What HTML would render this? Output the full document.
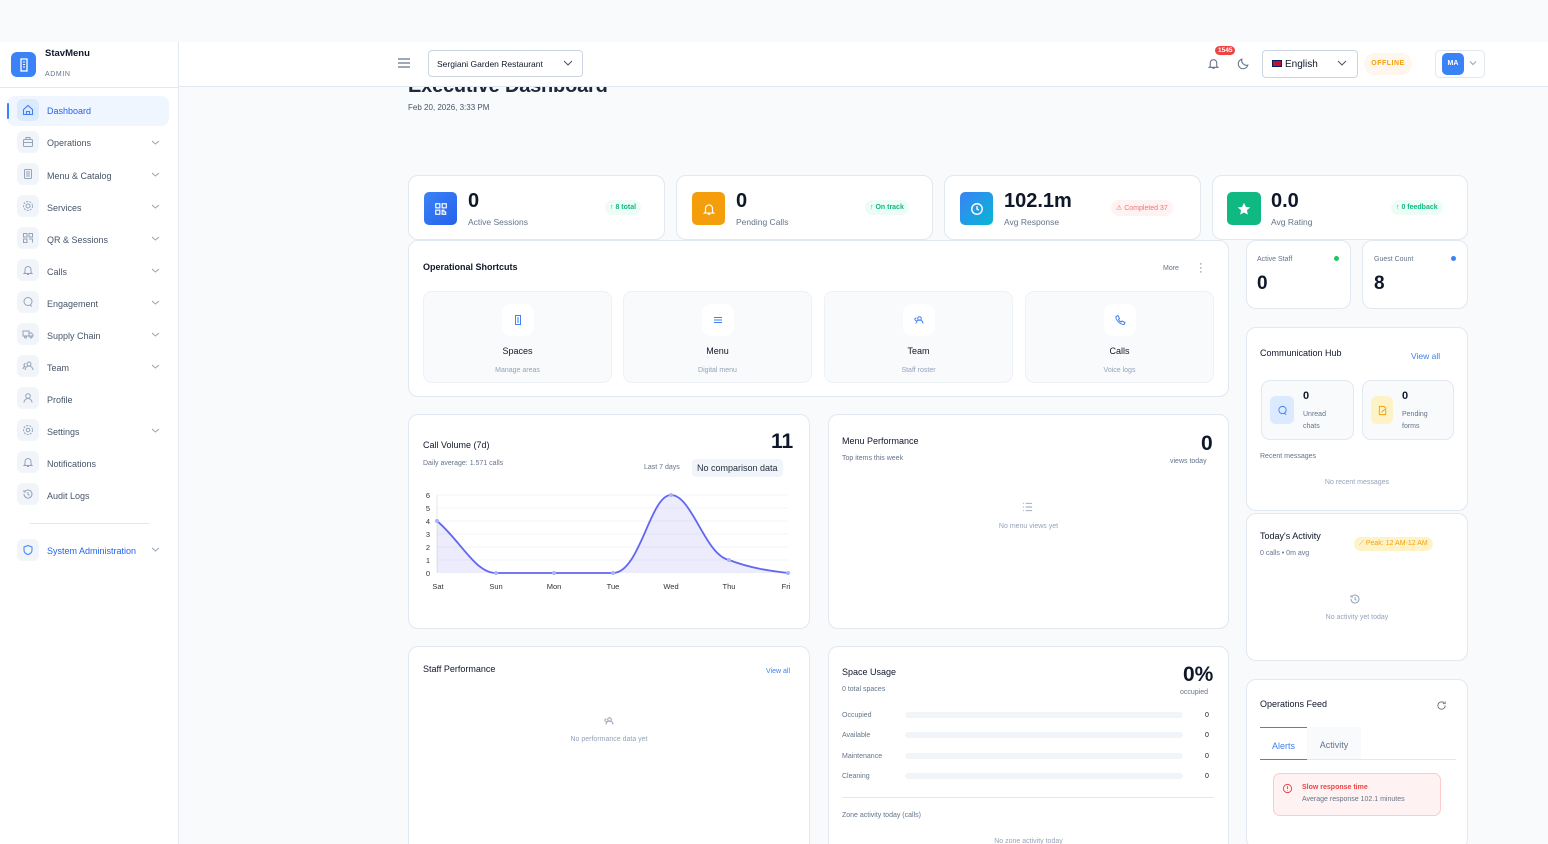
<!DOCTYPE html>
<html><head><meta charset="utf-8"><style>
*{box-sizing:border-box;margin:0;padding:0}
html,body{width:1548px;height:844px;overflow:hidden}
body{background:#f8fafc;font-family:"Liberation Sans",sans-serif;color:#0f172a;position:relative}
.a{position:absolute}
.card{position:absolute;background:#fff;border:1px solid #e2e8f0;border-radius:10px}
.side{position:absolute;left:0;top:42px;width:179px;height:802px;background:#fff;border-right:1px solid #e2e8f0}
.ni{position:absolute;left:17px;width:22px;height:22px;border-radius:6px;background:#f1f5f9;display:flex;align-items:center;justify-content:center}
.nl{position:absolute;left:47px;font-size:9px;color:#475569}
.ch{position:absolute;left:151px;width:9px;height:9px}
.t{font-size:9px;font-weight:bold;color:#0f172a}
.s{font-size:7px;color:#94a3b8}
.big{font-size:20px;font-weight:bold}
.pill{position:absolute;font-size:7px;font-weight:bold;border-radius:9px;padding:4px 5px}
.sc{position:absolute;top:50px;width:189px;height:92px;background:#f8fafc;border:1px solid #eef2f7;border-radius:9px;text-align:center}
.sc .ic{width:32px;height:32px;background:#fff;border-radius:9px;margin:12px auto 10px;display:flex;align-items:center;justify-content:center}
.sc b{display:block;font-size:9px;font-weight:normal;color:#0f172a;margin-bottom:3px}
.bar{position:absolute;left:76px;width:278px;height:6px;background:#f1f5f9;border-radius:3px}
</style></head><body>

<div class="side">
  <div class="a" style="left:11px;top:10px;width:25px;height:25px;background:#3b82f6;border-radius:6px;display:flex;align-items:center;justify-content:center"><svg width="12" height="14" viewBox="0 0 12 14"><rect x="3" y="1" width="6" height="12" fill="none" stroke="#fff" stroke-width="1.3"/><path d="M5 4h2M5 6.5h2M5 9h2" stroke="#fff"/></svg></div>
  <div class="a" style="left:45px;top:6px;font-size:9.5px;font-weight:bold">StavMenu</div>
  <div class="a" style="left:45px;top:29px;font-size:7px;color:#64748b;letter-spacing:.6px">ADMIN</div>
  <div class="a" style="left:0;top:45px;width:179px;border-top:1px solid #e2e8f0"></div>
  <div class="a" style="left:7px;top:54px;width:162px;height:30px;background:#eff6ff;border-radius:8px"></div>
  <div class="a" style="left:7px;top:61px;width:2px;height:16px;background:#3b82f6;border-radius:1px"></div>
</div>
<div class="a" style="left:0;top:42px;width:179px;height:802px">
<div class="ni" style="top:57px;background:#dbeafe"><svg width="12" height="12" viewBox="0 0 12 12" fill="none" stroke="#3b82f6" stroke-width="1.1"><path d="M1.5 5.5L6 1.5l4.5 4v5h-9z M4.5 10.5v-3h3v3"/></svg></div><div class="nl" style="top:64px;color:#2563eb">Dashboard</div>
<div class="ni" style="top:89px"><svg width="12" height="12" viewBox="0 0 12 12" fill="none" stroke="#94a3b8"><rect x="1.5" y="3.5" width="9" height="7" rx="1"/><path d="M4 3.5v-2h4v2M1.5 6.5h9"/></svg></div><div class="nl" style="top:96px">Operations</div>
<div class="ni" style="top:121px"><svg width="12" height="12" viewBox="0 0 12 12" fill="none" stroke="#94a3b8"><rect x="2.5" y="1.5" width="7" height="9" rx="1"/><path d="M4 4h4M4 6h4M4 8h4"/></svg></div><div class="nl" style="top:129px">Menu &amp; Catalog</div>
<div class="ni" style="top:153px"><svg width="12" height="12" viewBox="0 0 12 12" fill="none" stroke="#94a3b8"><circle cx="6" cy="6" r="2"/><circle cx="6" cy="6" r="4.5" stroke-dasharray="2 1.2"/></svg></div><div class="nl" style="top:161px">Services</div>
<div class="ni" style="top:185px"><svg width="12" height="12" viewBox="0 0 12 12" fill="none" stroke="#94a3b8"><rect x="1.5" y="1.5" width="3.5" height="3.5"/><rect x="7" y="1.5" width="3.5" height="3.5"/><rect x="1.5" y="7" width="3.5" height="3.5"/><path d="M7 7h3.5v3.5"/></svg></div><div class="nl" style="top:193px">QR &amp; Sessions</div>
<div class="ni" style="top:217px"><svg width="12" height="12" viewBox="0 0 12 12" fill="none" stroke="#94a3b8"><path d="M3 8.5V5.5a3 3 0 016 0v3l1 1H2zM5 10.5h2"/></svg></div><div class="nl" style="top:225px">Calls</div>
<div class="ni" style="top:249px"><svg width="12" height="12" viewBox="0 0 12 12" fill="none" stroke="#94a3b8"><circle cx="6" cy="5.5" r="4"/><path d="M8 9l2 1.5"/></svg></div><div class="nl" style="top:257px">Engagement</div>
<div class="ni" style="top:281px"><svg width="12" height="12" viewBox="0 0 12 12" fill="none" stroke="#94a3b8"><rect x="1" y="3" width="6" height="5"/><path d="M7 5h2.5l1.5 2v1H7"/><circle cx="3.5" cy="9" r="1"/><circle cx="9" cy="9" r="1"/></svg></div><div class="nl" style="top:289px">Supply Chain</div>
<div class="ni" style="top:313px"><svg width="12" height="12" viewBox="0 0 12 12" fill="none" stroke="#94a3b8"><circle cx="7" cy="4" r="2"/><path d="M3 10a4 4 0 018 0M3.5 3.5a1.5 1.5 0 100 3M1 9a3 3 0 012-2.5"/></svg></div><div class="nl" style="top:321px">Team</div>
<div class="ni" style="top:345px"><svg width="12" height="12" viewBox="0 0 12 12" fill="none" stroke="#94a3b8"><circle cx="6" cy="4" r="2.3"/><path d="M2 10.5a4 4 0 018 0"/></svg></div><div class="nl" style="top:353px">Profile</div>
<div class="ni" style="top:377px"><svg width="12" height="12" viewBox="0 0 12 12" fill="none" stroke="#94a3b8"><circle cx="6" cy="6" r="1.8"/><circle cx="6" cy="6" r="4.5" stroke-dasharray="2 1.2"/></svg></div><div class="nl" style="top:385px">Settings</div>
<div class="ni" style="top:409px"><svg width="12" height="12" viewBox="0 0 12 12" fill="none" stroke="#94a3b8"><path d="M3 8.5V5.5a3 3 0 016 0v3l1 1H2zM5 10.5h2"/></svg></div><div class="nl" style="top:417px">Notifications</div>
<div class="ni" style="top:441px"><svg width="12" height="12" viewBox="0 0 12 12" fill="none" stroke="#94a3b8"><path d="M2 6a4 4 0 101.2-2.8M2 2v2h2M6 4v2.3l1.5 1"/></svg></div><div class="nl" style="top:449px">Audit Logs</div>
<div class="a" style="left:30px;top:481px;width:120px;border-top:1px solid #e5e7eb"></div>
<div class="ni" style="top:497px"><svg width="12" height="12" viewBox="0 0 12 12" fill="none" stroke="#3b82f6"><path d="M6 1.5l4 1.5v3c0 2.5-2 4-4 4.5-2-.5-4-2-4-4.5v-3z"/></svg></div><div class="nl" style="top:504px;color:#2563eb">System Administration</div>
<svg class="ch" style="top:96px" viewBox="0 0 9 9"><path d="M1 3l3.5 3L8 3" fill="none" stroke="#94a3b8"/></svg>
<svg class="ch" style="top:128px" viewBox="0 0 9 9"><path d="M1 3l3.5 3L8 3" fill="none" stroke="#94a3b8"/></svg>
<svg class="ch" style="top:160px" viewBox="0 0 9 9"><path d="M1 3l3.5 3L8 3" fill="none" stroke="#94a3b8"/></svg>
<svg class="ch" style="top:192px" viewBox="0 0 9 9"><path d="M1 3l3.5 3L8 3" fill="none" stroke="#94a3b8"/></svg>
<svg class="ch" style="top:224px" viewBox="0 0 9 9"><path d="M1 3l3.5 3L8 3" fill="none" stroke="#94a3b8"/></svg>
<svg class="ch" style="top:256px" viewBox="0 0 9 9"><path d="M1 3l3.5 3L8 3" fill="none" stroke="#94a3b8"/></svg>
<svg class="ch" style="top:288px" viewBox="0 0 9 9"><path d="M1 3l3.5 3L8 3" fill="none" stroke="#94a3b8"/></svg>
<svg class="ch" style="top:320px" viewBox="0 0 9 9"><path d="M1 3l3.5 3L8 3" fill="none" stroke="#94a3b8"/></svg>
<svg class="ch" style="top:384px" viewBox="0 0 9 9"><path d="M1 3l3.5 3L8 3" fill="none" stroke="#94a3b8"/></svg>
<svg class="ch" style="top:503px" viewBox="0 0 9 9"><path d="M1 3l3.5 3L8 3" fill="none" stroke="#94a3b8"/></svg>
</div>

<div class="a" style="left:408px;top:75px;font-size:20px;font-weight:bold;color:#1e293b;letter-spacing:-0.2px">Executive Dashboard</div>
<div class="a" style="left:408px;top:103px;font-size:8px;color:#475569">Feb 20, 2026, 3:33 PM</div>

<div class="a" style="left:179px;top:42px;width:1369px;height:45px;background:#fff;border-bottom:1px solid #e2e8f0"></div>
<svg class="a" style="left:398px;top:58px" width="12" height="10" viewBox="0 0 12 10"><path d="M0 1h12M0 5h12M0 9h12" stroke="#64748b" stroke-width="1.2"/></svg>
<div class="a" style="left:428px;top:50px;width:155px;height:27px;border:1px solid #cbd5e1;border-radius:4px;font-size:8.5px;padding:8px 0 0 8px">Sergiani Garden Restaurant</div>
<svg class="a" style="left:563px;top:59px" width="10" height="8" viewBox="0 0 10 8"><path d="M1 2l4 4 4-4" fill="none" stroke="#475569"/></svg>
<svg class="a" style="left:1207px;top:57px" width="13" height="13" viewBox="0 0 12 12" fill="none" stroke="#64748b"><path d="M3 8.5V5.5a3 3 0 016 0v3l1 1H2zM5 10.5h2"/></svg>
<div class="a" style="left:1215px;top:46px;background:#ef4444;color:#fff;font-size:6.5px;font-weight:bold;border-radius:5px;padding:1px 3px">1545</div>
<svg class="a" style="left:1237px;top:57px" width="13" height="13" viewBox="0 0 12 12" fill="none" stroke="#64748b"><path d="M10 7.5A4.5 4.5 0 014.5 2a4.5 4.5 0 105.5 5.5z"/></svg>
<div class="a" style="left:1262px;top:50px;width:96px;height:28px;border:1px solid #cbd5e1;border-radius:4px;font-size:10px;padding:8px 0 0 9px"><span style="display:inline-block;width:10px;height:7px;background:#c8102e;border:1px solid #012169;vertical-align:0;margin-right:3px"></span>English</div>
<svg class="a" style="left:1337px;top:59px" width="10" height="8" viewBox="0 0 10 8"><path d="M1 2l4 4 4-4" fill="none" stroke="#475569"/></svg>
<div class="a" style="left:1364px;top:53px;width:48px;height:22px;background:#fff7ed;border-radius:11px;color:#f59e0b;font-size:7px;font-weight:bold;text-align:center;padding-top:7px;letter-spacing:.5px">OFFLINE</div>
<div class="a" style="left:1435px;top:50px;width:50px;height:28px;border:1px solid #e2e8f0;border-radius:5px"></div>
<div class="a" style="left:1442px;top:53px;width:22px;height:22px;background:#3b82f6;border-radius:5px;color:#fff;font-size:7px;font-weight:bold;text-align:center;padding-top:7px">MA</div>
<svg class="a" style="left:1469px;top:60px" width="8" height="6" viewBox="0 0 8 6"><path d="M1 1.5l3 3 3-3" fill="none" stroke="#94a3b8"/></svg>

<div class="card" style="left:408px;top:175px;width:257px;height:65px">
 <div class="a" style="left:15px;top:16px;width:33px;height:33px;background:linear-gradient(135deg,#3b82f6,#2563eb);border-radius:5px;display:flex;align-items:center;justify-content:center"><svg width="14" height="14" viewBox="0 0 12 12" fill="none" stroke="#fff"><rect x="1.5" y="1.5" width="3.5" height="3.5"/><rect x="7" y="1.5" width="3.5" height="3.5"/><rect x="1.5" y="7" width="3.5" height="3.5"/><path d="M7 7h1.5v1.5H10v2H7z"/></svg></div>
 <div class="a big" style="left:59px;top:14px">0</div><div class="a" style="left:59px;top:41px;font-size:8.5px;color:#64748b">Active Sessions</div>
 <div class="pill" style="left:196px;top:24px;background:#ecfdf5;color:#10b981">↑ 8 total</div></div>
<div class="card" style="left:676px;top:175px;width:257px;height:65px">
 <div class="a" style="left:15px;top:16px;width:33px;height:33px;background:#f59e0b;border-radius:5px;display:flex;align-items:center;justify-content:center"><svg width="14" height="14" viewBox="0 0 12 12" fill="none" stroke="#fff"><path d="M3 8.5V5.5a3 3 0 016 0v3l1 1H2zM5 10.5h2"/></svg></div>
 <div class="a big" style="left:59px;top:14px">0</div><div class="a" style="left:59px;top:41px;font-size:8.5px;color:#64748b">Pending Calls</div>
 <div class="pill" style="left:188px;top:24px;background:#ecfdf5;color:#10b981">↑ On track</div></div>
<div class="card" style="left:944px;top:175px;width:257px;height:65px">
 <div class="a" style="left:15px;top:16px;width:33px;height:33px;background:linear-gradient(135deg,#3b82f6,#06b6d4);border-radius:5px;display:flex;align-items:center;justify-content:center"><svg width="14" height="14" viewBox="0 0 12 12" fill="none" stroke="#fff" stroke-width="1.2"><circle cx="6" cy="6" r="4.5"/><path d="M6 3.5V6l1.5 1"/></svg></div>
 <div class="a big" style="left:59px;top:14px">102.1m</div><div class="a" style="left:59px;top:41px;font-size:8.5px;color:#64748b">Avg Response</div>
 <div class="pill" style="left:166px;top:24px;background:#fef2f2;color:#f87171;font-weight:normal">⚠ Completed 37</div></div>
<div class="card" style="left:1212px;top:175px;width:256px;height:65px">
 <div class="a" style="left:14px;top:16px;width:34px;height:33px;background:#10b981;border-radius:5px;display:flex;align-items:center;justify-content:center"><svg width="14" height="14" viewBox="0 0 12 12"><path d="M6 .8l1.6 3.4 3.7.4-2.8 2.5.8 3.7L6 9 2.7 10.8l.8-3.7L.7 4.6l3.7-.4z" fill="#fff"/></svg></div>
 <div class="a big" style="left:58px;top:14px">0.0</div><div class="a" style="left:58px;top:41px;font-size:8.5px;color:#64748b">Avg Rating</div>
 <div class="pill" style="left:178px;top:24px;background:#ecfdf5;color:#10b981">↑ 0 feedback</div></div>

<div class="card" style="left:408px;top:240px;width:821px;height:157px">
 <div class="a t" style="left:14px;top:21px">Operational Shortcuts</div>
 <div class="a" style="left:754px;top:24px;font-size:7px;color:#64748b">More</div>
 <div class="a" style="left:790px;top:21px;font-size:11px;color:#64748b;line-height:4px">·<br>·<br>·</div>
 <div class="sc" style="left:14px"><div class="ic"><svg width="12" height="12" viewBox="0 0 12 12" fill="none" stroke="#3b82f6"><rect x="3.5" y="1.5" width="5" height="9"/><path d="M5 4h2M5 6h2M5 8h2"/></svg></div><b>Spaces</b><span class="s">Manage areas</span></div>
 <div class="sc" style="left:214px"><div class="ic"><svg width="12" height="12" viewBox="0 0 12 12" stroke="#3b82f6"><path d="M2 3.5h8M2 6h8M2 8.5h8"/></svg></div><b>Menu</b><span class="s">Digital menu</span></div>
 <div class="sc" style="left:415px"><div class="ic"><svg width="12" height="12" viewBox="0 0 12 12" fill="none" stroke="#3b82f6"><circle cx="6.5" cy="4.5" r="1.8"/><path d="M3 9.5a3.5 3.5 0 017 0M3.5 4a1.3 1.3 0 100 2.5"/></svg></div><b>Team</b><span class="s">Staff roster</span></div>
 <div class="sc" style="left:616px"><div class="ic"><svg width="12" height="12" viewBox="0 0 12 12" fill="none" stroke="#3b82f6"><path d="M2 2.5l2-1 1.5 3-1 1a6 6 0 002.5 2.5l1-1 3 1.5-1 2C6 10.5 1.5 6 2 2.5z"/></svg></div><b>Calls</b><span class="s">Voice logs</span></div>
</div>

<div class="card" style="left:1246px;top:240px;width:105px;height:69px">
 <div class="a s" style="left:10px;top:15px;color:#64748b">Active Staff</div><div class="a" style="left:87px;top:15px;width:5px;height:5px;border-radius:50%;background:#22c55e"></div>
 <div class="a" style="left:10px;top:32px;font-size:19px;font-weight:bold">0</div></div>
<div class="card" style="left:1362px;top:240px;width:106px;height:69px">
 <div class="a s" style="left:11px;top:15px;color:#64748b">Guest Count</div><div class="a" style="left:88px;top:15px;width:5px;height:5px;border-radius:50%;background:#3b82f6"></div>
 <div class="a" style="left:11px;top:32px;font-size:19px;font-weight:bold">8</div></div>

<div class="card" style="left:1246px;top:327px;width:222px;height:184px">
 <div class="a t" style="left:13px;top:20px;font-weight:normal;color:#0f172a">Communication Hub</div>
 <div class="a" style="left:164px;top:23px;font-size:8.5px;color:#3b82f6">View all</div>
 <div class="a" style="left:14px;top:52px;width:93px;height:60px;background:#f8fafc;border:1px solid #e2e8f0;border-radius:9px">
  <div class="a" style="left:8px;top:15px;width:24px;height:28px;background:#dbeafe;border-radius:6px;display:flex;align-items:center;justify-content:center"><svg width="11" height="11" viewBox="0 0 12 12" fill="none" stroke="#3b82f6"><circle cx="6" cy="5.5" r="4"/><path d="M8 9l2 1.5"/></svg></div>
  <div class="a" style="left:41px;top:9px;font-size:11px;font-weight:bold">0</div><div class="a s" style="left:41px;top:28px;line-height:12px;color:#64748b">Unread<br>chats</div></div>
 <div class="a" style="left:115px;top:52px;width:92px;height:60px;background:#f8fafc;border:1px solid #e2e8f0;border-radius:9px">
  <div class="a" style="left:8px;top:15px;width:22px;height:28px;background:#fef3c7;border-radius:6px;display:flex;align-items:center;justify-content:center"><svg width="11" height="11" viewBox="0 0 12 12" fill="none" stroke="#f59e0b"><path d="M2.5 1.5h5l2 2v7h-7z M5 8l3.5-3.5"/></svg></div>
  <div class="a" style="left:39px;top:9px;font-size:11px;font-weight:bold">0</div><div class="a s" style="left:39px;top:28px;line-height:12px;color:#64748b">Pending<br>forms</div></div>
 <div class="a s" style="left:13px;top:125px;color:#64748b">Recent messages</div>
 <div class="a s" style="left:0;width:220px;text-align:center;top:151px">No recent messages</div>
</div>

<div class="card" style="left:1246px;top:513px;width:222px;height:148px">
 <div class="a" style="left:13px;top:17px;font-size:9px">Today's Activity</div>
 <div class="a s" style="left:13px;top:36px;color:#64748b">0 calls • 0m avg</div>
 <div class="a" style="left:107px;top:23px;background:#fef3c7;border-radius:8px;padding:3px 5px;font-size:7px;color:#f59e0b">⟋ Peak: 12 AM-12 AM</div>
 <svg class="a" style="left:102px;top:79px" width="12" height="12" viewBox="0 0 12 12" fill="none" stroke="#94a3b8"><path d="M2 6a4 4 0 101.2-2.8M2 2v2h2M6 4v2.3l1.5 1"/></svg>
 <div class="a s" style="left:0;width:220px;text-align:center;top:100px">No activity yet today</div>
</div>

<div class="card" style="left:1246px;top:679px;width:222px;height:170px">
 <div class="a" style="left:13px;top:19px;font-size:9px">Operations Feed</div>
 <svg class="a" style="left:189px;top:20px" width="11" height="11" viewBox="0 0 12 12" fill="none" stroke="#64748b"><path d="M10 6a4 4 0 11-1.2-2.8M10 1.5v2.5H7.5"/></svg>
 <div class="a" style="left:13px;top:47px;width:196px;border-bottom:1px solid #e2e8f0;height:33px"></div>
 <div class="a" style="left:13px;top:47px;width:47px;height:33px;border-top:1px solid #3b82f6;border-bottom:1px solid #3b82f6;font-size:9px;color:#3b82f6;text-align:center;padding-top:13px">Alerts</div>
 <div class="a" style="left:60px;top:47px;width:54px;height:32px;background:#f8fafc;font-size:9px;color:#64748b;text-align:center;padding-top:13px">Activity</div>
 <div class="a" style="left:26px;top:93px;width:168px;height:43px;background:#fef2f2;border:1px solid #fecaca;border-radius:7px">
  <svg class="a" style="left:8px;top:9px" width="11" height="11" viewBox="0 0 12 12" fill="none" stroke="#ef4444"><circle cx="6" cy="6" r="4.5"/><path d="M6 3.5v3M6 8v.6"/></svg>
  <div class="a" style="left:28px;top:10px;font-size:7px;font-weight:bold;color:#ef4444">Slow response time</div>
  <div class="a" style="left:28px;top:22px;font-size:7px;color:#64748b">Average response 102.1 minutes</div></div>
</div>

<div class="card" style="left:408px;top:414px;width:402px;height:215px">
 <div class="a" style="left:14px;top:25px;font-size:9px">Call Volume (7d)</div>
 <div class="a s" style="left:14px;top:45px;color:#64748b">Daily average: 1.571 calls</div>
 <div class="a" style="left:362px;top:15px;font-size:21px;font-weight:bold">11</div>
 <div class="a s" style="left:235px;top:49px;color:#64748b">Last 7 days</div>
 <div class="a" style="left:283px;top:44px;background:#f1f5f9;border-radius:4px;padding:4px 5px;font-size:9px;color:#1e293b">No comparison data</div>
</div>
<svg class="a" style="left:408px;top:414px" width="402" height="215" viewBox="408 414 402 215">
 <g stroke="#f1f5f9"><path d="M437 495h351M437 508h351M437 521h351M437 534h351M437 547h351M437 560h351"/></g>
 <path d="M437 495v78" stroke="#e5e7eb"/>
 <g font-size="7.5" fill="#333" font-family="Liberation Sans" text-anchor="end"><text x="430" y="498">6</text><text x="430" y="511">5</text><text x="430" y="524">4</text><text x="430" y="537">3</text><text x="430" y="550">2</text><text x="430" y="563">1</text><text x="430" y="576">0</text></g>
 <g font-size="7.5" fill="#333" font-family="Liberation Sans" text-anchor="middle"><text x="438" y="589">Sat</text><text x="496" y="589">Sun</text><text x="554" y="589">Mon</text><text x="613" y="589">Tue</text><text x="671" y="589">Wed</text><text x="729" y="589">Thu</text><text x="786" y="589">Fri</text></g>
 <path d="M437 521C460 540 475 573 496 573L613 573C640 573 650 495 671 495C692 495 705 555 729 560C750 568 770 571 788 573L437 573Z" fill="#6366f1" fill-opacity=".12"/>
 <path d="M437 521C460 540 475 573 496 573L613 573C640 573 650 495 671 495C692 495 705 555 729 560C750 568 770 571 788 573" fill="none" stroke="#6366f1" stroke-width="1.8"/>
 <g fill="#a5b4fc"><circle cx="437" cy="521" r="2"/><circle cx="496" cy="573" r="2"/><circle cx="554" cy="573" r="2"/><circle cx="613" cy="573" r="2"/><circle cx="671" cy="495" r="2"/><circle cx="729" cy="560" r="2"/><circle cx="788" cy="573" r="2"/></g>
</svg>

<div class="card" style="left:828px;top:414px;width:401px;height:215px">
 <div class="a" style="left:13px;top:21px;font-size:9px">Menu Performance</div>
 <div class="a s" style="left:13px;top:40px;color:#64748b">Top items this week</div>
 <div class="a" style="left:372px;top:17px;font-size:21px;font-weight:bold">0</div>
 <div class="a s" style="left:341px;top:43px;color:#64748b">views today</div>
 <svg class="a" style="left:193px;top:87px" width="11" height="10" viewBox="0 0 12 10" stroke="#94a3b8"><path d="M1 1h1M4 1h7M1 5h1M4 5h7M1 9h1M4 9h7"/></svg>
 <div class="a s" style="left:0;width:399px;text-align:center;top:108px">No menu views yet</div>
</div>

<div class="card" style="left:408px;top:646px;width:402px;height:210px">
 <div class="a" style="left:14px;top:17px;font-size:9px">Staff Performance</div>
 <div class="a" style="left:357px;top:21px;font-size:7px;color:#3b82f6">View all</div>
 <svg class="a" style="left:194px;top:68px" width="12" height="12" viewBox="0 0 12 12" fill="none" stroke="#94a3b8"><circle cx="6.5" cy="4.5" r="1.8"/><path d="M3 9.5a3.5 3.5 0 017 0M3.5 4a1.3 1.3 0 100 2.5"/></svg>
 <div class="a s" style="left:0;width:400px;text-align:center;top:89px">No performance data yet</div>
</div>

<div class="card" style="left:828px;top:646px;width:401px;height:210px">
 <div class="a" style="left:13px;top:20px;font-size:9px">Space Usage</div>
 <div class="a s" style="left:13px;top:39px;color:#64748b">0 total spaces</div>
 <div class="a" style="left:354px;top:16px;font-size:21px;font-weight:bold">0%</div>
 <div class="a s" style="left:351px;top:42px;color:#64748b">occupied</div>
 <div class="a s" style="left:13px;top:65px;color:#64748b">Occupied</div><div class="bar" style="top:65px"></div><div class="a" style="left:376px;top:65px;font-size:7px">0</div>
 <div class="a s" style="left:13px;top:85px;color:#64748b">Available</div><div class="bar" style="top:85px"></div><div class="a" style="left:376px;top:85px;font-size:7px">0</div>
 <div class="a s" style="left:13px;top:106px;color:#64748b">Maintenance</div><div class="bar" style="top:106px"></div><div class="a" style="left:376px;top:106px;font-size:7px">0</div>
 <div class="a s" style="left:13px;top:126px;color:#64748b">Cleaning</div><div class="bar" style="top:126px"></div><div class="a" style="left:376px;top:126px;font-size:7px">0</div>
 <div class="a" style="left:13px;top:150px;width:372px;border-top:1px solid #e2e8f0"></div>
 <div class="a s" style="left:13px;top:165px;color:#64748b">Zone activity today (calls)</div>
 <div class="a s" style="left:0;width:399px;text-align:center;top:191px">No zone activity today</div>
</div>
</body></html>
